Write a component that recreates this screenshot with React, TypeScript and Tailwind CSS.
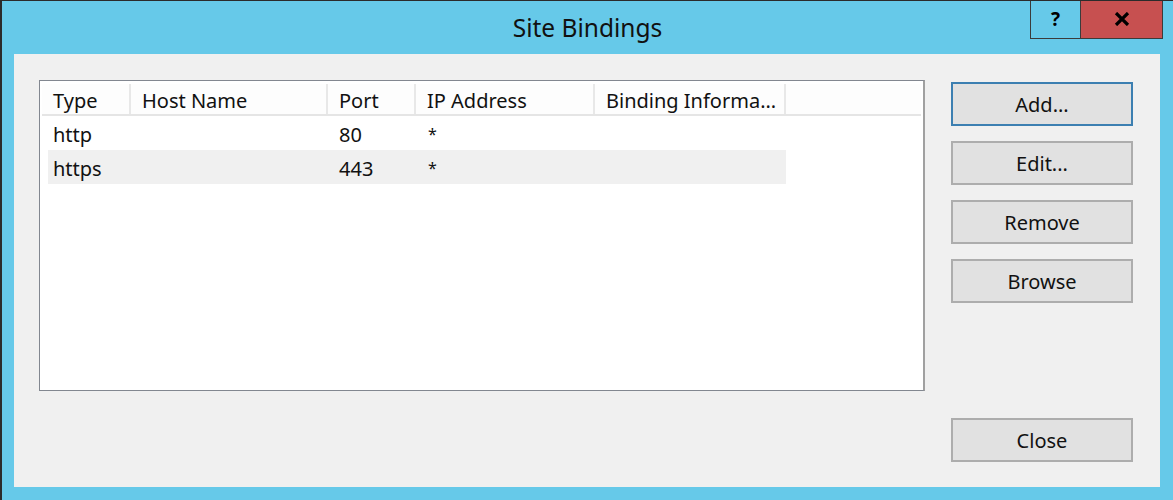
import React from 'react';

type Binding = { type: string; host: string; port: string; ip: string; info: string };

const bindings: Binding[] = [
  { type: 'http', host: '', port: '80', ip: '*', info: '' },
  { type: 'https', host: '', port: '443', ip: '*', info: '' },
];

const columns = [
  { label: 'Type', width: 'w-[89px]' },
  { label: 'Host Name', width: 'w-[197px]' },
  { label: 'Port', width: 'w-[88px]' },
  { label: 'IP Address', width: 'w-[179px]' },
  { label: 'Binding Informa...', width: 'w-[191px]' },
];

const DialogButton: React.FC<{ label: string; focused?: boolean }> = ({ label, focused }) => (
  <button
    className={
      'w-[182px] h-[44px] bg-[#e1e1e1] text-[20px] text-[#111] flex items-center justify-center pt-[1px] ' +
      (focused ? 'border-2 border-[#3c7fb1]' : 'border-2 border-[#adadad]')
    }
  >
    {label}
  </button>
);

const App: React.FC = () => {
  return (
    <div
      className="w-[1173px] h-[500px] bg-[#66c9e9] border-l-2 border-t border-[#2b2b2b] flex flex-col overflow-hidden"
      style={{ fontFamily: '"Segoe UI", "Noto Sans", "Open Sans", sans-serif' }}
    >
      {/* Title bar */}
      <div className="h-[53px] flex relative">
        <div className="flex-1 flex items-center justify-center pt-[1px] text-[24.5px] text-[#111]">Site Bindings</div>
        <div className="absolute right-[10px] top-[-1px] flex h-[39px] border border-[#3b3b3b] border-t-0">
          <div className="w-[50px] flex items-center justify-center text-[19px] font-bold text-black border-r border-[#3b3b3b]">?</div>
          <div className="w-[81px] bg-[#c75050] flex items-center justify-center">
            <svg width="16" height="14" viewBox="0 0 16 14">
              <path d="M2 1 L14 13 M14 1 L2 13" stroke="#000" strokeWidth="3.2" />
            </svg>
          </div>
        </div>
      </div>

      {/* Client area */}
      <div className="ml-[12px] w-[1146px] h-[433px] bg-[#f0f0f0] flex pt-[26px] pl-[25px] gap-[26px]">
        {/* List view */}
        <div className="w-[886px] h-[311px] bg-white border border-[#828790] border-r-2 border-r-[#a0a0a0] p-[2px] pt-[3px]">
          <div className="flex h-[32px] border-b-2 border-[#e5e5e5] bg-[#fdfdfd]">
            {columns.map((c) => (
              <div
                key={c.label}
                className={c.width + ' border-r-2 border-[#e8e8e8] pl-[11px] pt-[3px] flex items-center text-[20px] text-[#111] whitespace-nowrap'}
              >
                {c.label}
              </div>
            ))}
          </div>
          <div className="pl-[6px]">
            {bindings.map((b, i) => (
              <div
                key={b.type}
                className={'flex h-[34px] w-[738px] text-[20px] text-[#111] pt-[3px] ' + (i % 2 === 1 ? 'bg-[#f0f0f0]' : '')}
              >
                <div className="w-[83px] pl-[5px] flex items-center">{b.type}</div>
                <div className="w-[197px] pl-[11px] flex items-center">{b.host}</div>
                <div className="w-[88px] pl-[11px] flex items-center">{b.port}</div>
                <div className="w-[179px] pl-[12px] flex items-start pt-[3px] text-[16px]">{b.ip}</div>
                <div className="w-[191px] pl-[11px] flex items-center">{b.info}</div>
              </div>
            ))}
          </div>
        </div>

        {/* Buttons */}
        <div className="flex flex-col pt-[2px]">
          <div className="flex flex-col gap-[15px]">
            <DialogButton label="Add..." focused />
            <DialogButton label="Edit..." />
            <DialogButton label="Remove" />
            <DialogButton label="Browse" />
          </div>
          <div className="mt-[115px]">
            <DialogButton label="Close" />
          </div>
        </div>
      </div>
    </div>
  );
};

export default App;
